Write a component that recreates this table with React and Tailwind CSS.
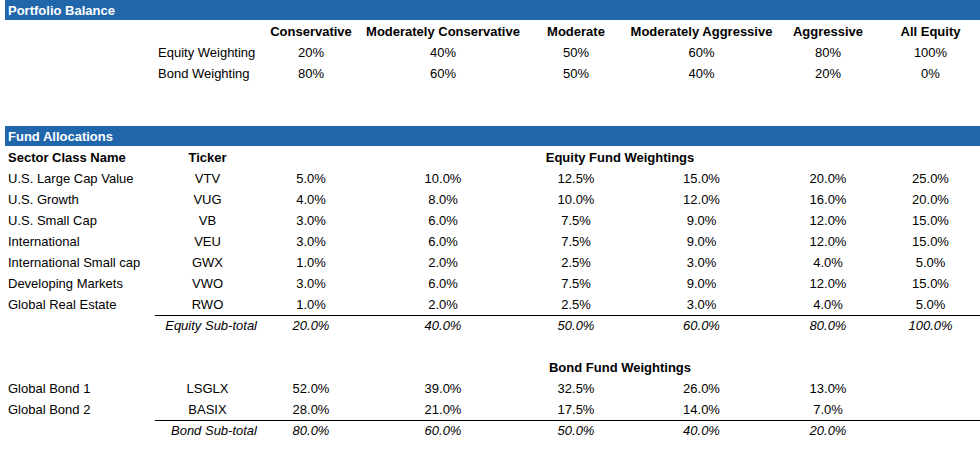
const cols = 'grid grid-cols-[150px_105px_102px_162px_104px_147px_106px_99px]';

const profiles = ['Conservative', 'Moderately Conservative', 'Moderate', 'Moderately Aggressive', 'Aggressive', 'All Equity'];

const equityFunds = [
  ['U.S. Large Cap Value', 'VTV', ['5.0%', '10.0%', '12.5%', '15.0%', '20.0%', '25.0%']],
  ['U.S. Growth', 'VUG', ['4.0%', '8.0%', '10.0%', '12.0%', '16.0%', '20.0%']],
  ['U.S. Small Cap', 'VB', ['3.0%', '6.0%', '7.5%', '9.0%', '12.0%', '15.0%']],
  ['International', 'VEU', ['3.0%', '6.0%', '7.5%', '9.0%', '12.0%', '15.0%']],
  ['International Small cap', 'GWX', ['1.0%', '2.0%', '2.5%', '3.0%', '4.0%', '5.0%']],
  ['Developing Markets', 'VWO', ['3.0%', '6.0%', '7.5%', '9.0%', '12.0%', '15.0%']],
  ['Global Real Estate', 'RWO', ['1.0%', '2.0%', '2.5%', '3.0%', '4.0%', '5.0%']],
];

const bondFunds = [
  ['Global Bond 1', 'LSGLX', ['52.0%', '39.0%', '32.5%', '26.0%', '13.0%', '']],
  ['Global Bond 2', 'BASIX', ['28.0%', '21.0%', '17.5%', '14.0%', '7.0%', '']],
];

function SectionBar({ title }) {
  return (
    <div className="h-[21px]">
      <div className="h-[20px] bg-[#2066aa] pl-[3px] text-[13px] leading-[21px] font-bold text-white">{title}</div>
    </div>
  );
}

function Blank() {
  return <div className="h-[21px]" />;
}

function FundRow({ name, ticker, values, ruled }) {
  const line = ruled ? 'border-b border-black' : '';
  return (
    <div className={`${cols} h-[21px] leading-[21px]`}>
      <div className="pl-[3px] whitespace-nowrap">{name}</div>
      <div className={`text-center ${line}`}>{ticker}</div>
      {values.map((v, i) => (
        <div key={i} className={`text-center ${line}`}>{v}</div>
      ))}
    </div>
  );
}

function SubtotalRow({ label, values }) {
  return (
    <div className={`${cols} h-[21px] leading-[21px] italic`}>
      <div />
      <div className="text-right pr-[3px] whitespace-nowrap">{label}</div>
      {values.map((v, i) => (
        <div key={i} className="text-center">{v}</div>
      ))}
    </div>
  );
}

function GroupHeading({ children }) {
  return (
    <div className={`${cols} h-[21px] leading-[21px] font-bold`}>
      <div />
      <div />
      <div className="col-span-6 text-center">{children}</div>
    </div>
  );
}

export default function App() {
  return (
    <div className="w-[980px] h-[465px] bg-white pl-[5px] text-[13px] text-black font-['Liberation_Sans',Arial,sans-serif] overflow-hidden">
      <SectionBar title="Portfolio Balance" />

      <div className={`${cols} h-[21px] leading-[21px] font-bold`}>
        <div />
        <div />
        {profiles.map((p) => (
          <div key={p} className="text-center whitespace-nowrap">{p}</div>
        ))}
      </div>
      <div className={`${cols} h-[21px] leading-[21px]`}>
        <div />
        <div className="pl-[3px] whitespace-nowrap">Equity Weighting</div>
        {['20%', '40%', '50%', '60%', '80%', '100%'].map((v, i) => (
          <div key={i} className="text-center">{v}</div>
        ))}
      </div>
      <div className={`${cols} h-[21px] leading-[21px]`}>
        <div />
        <div className="pl-[3px] whitespace-nowrap">Bond Weighting</div>
        {['80%', '60%', '50%', '40%', '20%', '0%'].map((v, i) => (
          <div key={i} className="text-center">{v}</div>
        ))}
      </div>
      <Blank />
      <Blank />

      <SectionBar title="Fund Allocations" />

      <div className={`${cols} h-[21px] leading-[21px] font-bold`}>
        <div className="pl-[3px] whitespace-nowrap">Sector Class Name</div>
        <div className="text-center">Ticker</div>
        <div className="col-span-6 text-center">Equity Fund Weightings</div>
      </div>
      {equityFunds.map(([name, ticker, values], i) => (
        <FundRow key={ticker} name={name} ticker={ticker} values={values} ruled={i === equityFunds.length - 1} />
      ))}
      <SubtotalRow label="Equity Sub-total" values={['20.0%', '40.0%', '50.0%', '60.0%', '80.0%', '100.0%']} />
      <Blank />

      <GroupHeading>Bond Fund Weightings</GroupHeading>
      {bondFunds.map(([name, ticker, values], i) => (
        <FundRow key={ticker} name={name} ticker={ticker} values={values} ruled={i === bondFunds.length - 1} />
      ))}
      <SubtotalRow label="Bond Sub-total" values={['80.0%', '60.0%', '50.0%', '40.0%', '20.0%', '']} />
    </div>
  );
}
